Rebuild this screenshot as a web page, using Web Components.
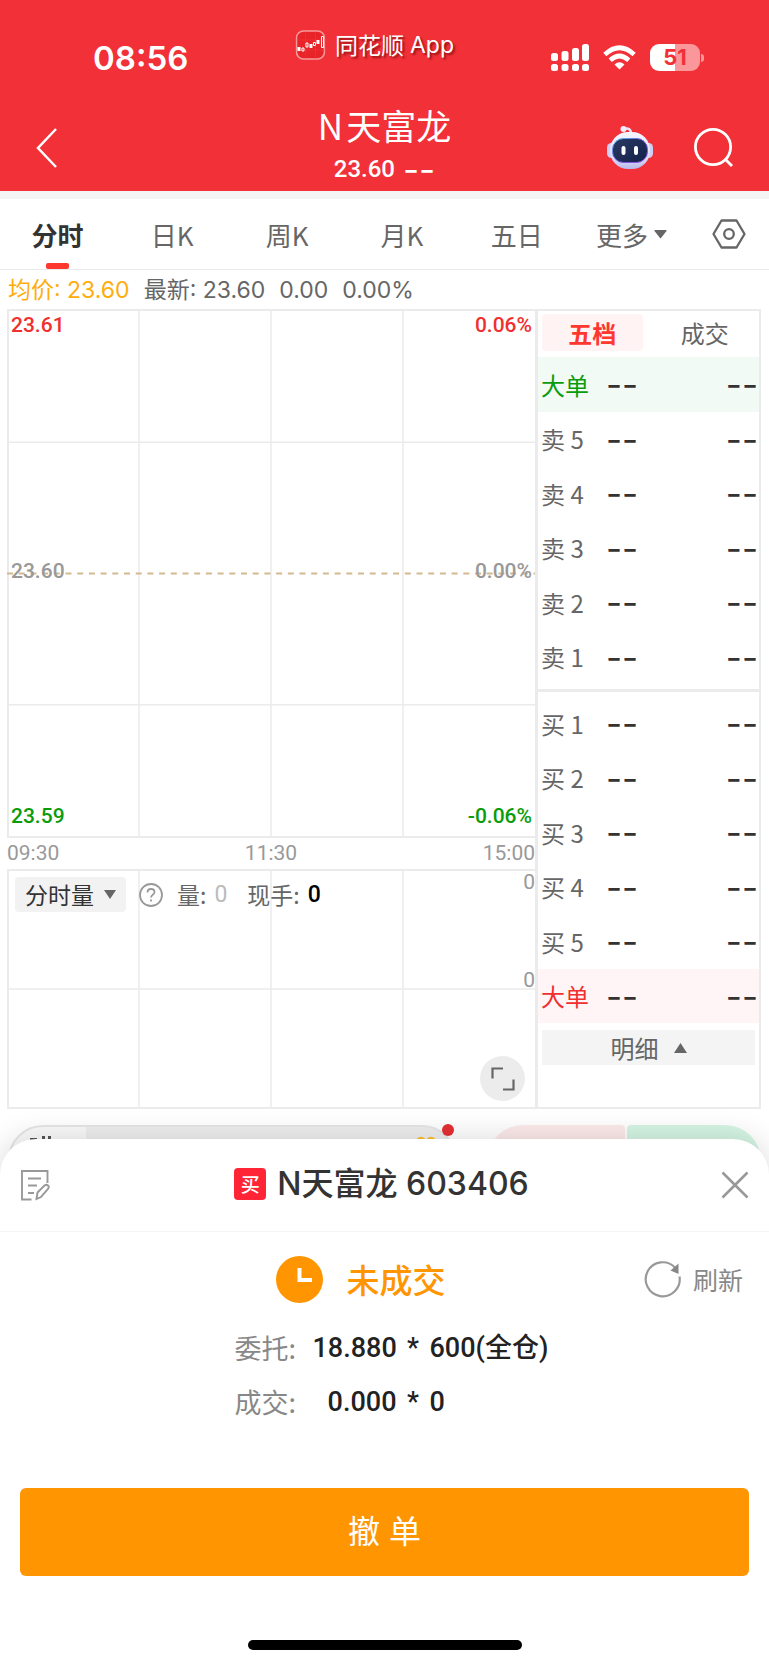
<!DOCTYPE html>
<html lang="zh-CN">
<head>
<meta charset="utf-8">
<meta name="viewport" content="width=device-width, initial-scale=1">
<title>N天富龙 603406</title>
<style>
  :root {
    --sans: "Noto Sans CJK SC", sans-serif;
    --inter: Inter, "Noto Sans CJK SC", sans-serif;
    --num: Roboto, "Noto Sans CJK SC", sans-serif;
    --brand: #f23037;
    --up: #f0302f;
    --down: #0a9c0a;
    --ink: #333;
    --text: #666;
    --muted: #999;
    --line: #ebebeb;
    --orange: #ff9500;
  }
  body {
    margin: 0;
    background: #fff;
    font-family: var(--sans);
    color: var(--text);
  }
</style>
</head>
<body>

<stock-page>
  <app-header slot="header" name="N天富龙" price="23.60"></app-header>
  <period-tabs slot="tabs"></period-tabs>
  <price-chart slot="chart"></price-chart>
  <order-book slot="book"></order-book>
  <order-sheet slot="sheet">
    <span slot="title">N天富龙 603406</span>
    <span slot="status">未成交</span>
  </order-sheet>
</stock-page>

<script>
// shared base: clones the class template into an open shadow root
class BaseElement extends HTMLElement {
  constructor() {
    super();
    const t = document.createElement("template");
    t.innerHTML = this.template;
    this.attachShadow({ mode: "open" });
    this.shadowRoot.appendChild(t.content.cloneNode(true));
  }
}

const RESET = `
  * { box-sizing: border-box; }
  button {
    border: 0;
    margin: 0;
    padding: 0;
    background: none;
    font: inherit;
    color: inherit;
    cursor: pointer;
  }
  svg { display: block; }
`;

class StatusBar extends BaseElement {
  get template() {
    return `
    <style>
      ${RESET}
      :host {
        display: flex;
        position: relative;
        justify-content: space-between;
        align-items: center;
        height: 104px;
        padding: 11px 69px 0 93px;
      }
      time {
        font: 600 33px/40px var(--inter);
      }
      .mark {
        position: absolute;
        top: 28px;
        left: calc(50% - 10px);
        display: flex;
        align-items: center;
        gap: 10px;
        font-size: 23px;
        line-height: 32px;
        transform: translateX(-50%);
        text-shadow: 2px 2px 2px rgba(90, 0, 0, .6);
      }
      .mark span { display: flex; gap: 6px; }
      .mark i { font: normal 23px/34px var(--inter); }
      .icons { display: flex; align-items: center; gap: 14px; }
      .battery {
        position: relative;
        width: 50px;
        height: 27px;
        border-radius: 9px;
        background: linear-gradient(90deg, #fff 50%, #f9979b 50%);
        color: var(--brand);
        font: 700 22px/27px var(--inter);
        text-align: center;
      }
      .battery::after {
        content: "";
        position: absolute;
        right: -4px;
        top: 10px;
        width: 3px;
        height: 8px;
        border-radius: 0 3px 3px 0;
        background: #f9979b;
      }
    </style>
    <time>08:56</time>
    <div class="mark">
      <svg width="30" height="30" viewBox="0 0 30 30" fill="none">
        <rect x="1" y="1" width="28" height="28" rx="7" fill="#e92429" stroke="#f79a9c" stroke-width="1.6"/>
        <path d="M1 10h28M1 20h28M10 1v28M20 1v28" stroke="#f04c50" stroke-width=".3"/>
        <path d="M2 17h3v4h-3zM14 14h3v4h-3zM21 10h3v4h-3z" fill="#fff"/>
        <path d="M6.500 18h2v3h-2zM10.500 13h2v4h-2zM18 12.500h2v3h-2zM26 6.500h2v11h-2z" stroke="#fff"/>
      </svg>
      <span>同花顺<i>App</i></span>
    </div>
    <div class="icons">
      <svg width="38" height="28" viewBox="0 0 38 28" fill="#fff">
        <rect x="0" y="9" width="7" height="8" rx="2.500"/><rect x="10.500" y="7" width="7" height="10" rx="2.500"/>
        <rect x="21" y="4" width="7" height="13" rx="2.500"/><rect x="31" y="0" width="7" height="17" rx="2.500"/>
        <rect x="0" y="20" width="7" height="7" rx="2.500"/><rect x="10.500" y="20" width="7" height="7" rx="2.500"/>
        <rect x="21" y="20" width="7" height="7" rx="2.500"/><rect x="31" y="20" width="7" height="7" rx="2.500"/>
      </svg>
      <svg width="33" height="25" viewBox="0 0 33 25" fill="none" stroke="#fff" stroke-width="4.600">
        <path d="M1.800 9.500Q16.500 -4 31.200 9.500"/>
        <path d="M7.200 15.200Q16.500 6.800 25.800 15.200"/>
        <path d="M11.500 19.500Q16.500 15.200 21.500 19.500L16.500 24.500Z" fill="#fff" stroke="none"/>
      </svg>
      <div class="battery">51</div>
    </div>
    `;
  }
}
customElements.define("status-bar", StatusBar);

class AppHeader extends BaseElement {
  get template() {
    return `
    <style>
      ${RESET}
      :host {
        display: block;
        background: var(--brand);
        color: #fff;
        border-bottom: 8px solid #f4f4f4;
      }
      nav {
        display: grid;
        grid-template-columns: 1fr auto 1fr;
        align-items: center;
        height: 87px;
        padding: 0 36px;
      }
      h1 {
        margin: 0;
        font-size: 35px;
        font-weight: 400;
        line-height: 42px;
        text-align: center;
      }
      .gap { margin-right: 3px; }
      p {
        display: flex;
        justify-content: center;
        align-items: center;
        gap: 8px;
        margin: 9px 0 8px;
        font: 500 24px/28px var(--num);
      }
      p b { font: 400 35px/28px var(--inter); }
      .actions {
        display: flex;
        justify-content: flex-end;
        align-items: center;
        gap: 40px;
      }
    </style>
    <status-bar></status-bar>
    <nav>
      <button aria-label="返回">
        <svg width="21" height="40" viewBox="0 0 21 40" fill="none" stroke="#fff" stroke-width="2.500"><path d="M20 1L2 20L20 39"/></svg>
      </button>
      <div>
        <h1><span class="gap">N</span><span class="name"></span></h1>
        <p><span class="price"></span><b>--</b></p>
      </div>
      <div class="actions">
        <button aria-label="助手">
          <svg width="48" height="46" viewBox="0 0 48 46">
            <defs>
              <linearGradient id="shell" x2="0" y2="1"><stop offset="0" stop-color="#f7f6ff"/><stop offset=".7" stop-color="#dcdcf8"/><stop offset="1" stop-color="#b9b8ea"/></linearGradient>
              <linearGradient id="glass" x2="1" y2="1"><stop offset="0" stop-color="#2a3963"/><stop offset="1" stop-color="#14214a"/></linearGradient>
              <linearGradient id="rim" x2="1" y2="1"><stop offset="0" stop-color="#63c8f0"/><stop offset=".5" stop-color="#6a4ee0"/><stop offset="1" stop-color="#9b5cf0"/></linearGradient>
            </defs>
            <path d="M18 4C22 2.500 25 4 25 9" fill="none" stroke="#e9e6fa" stroke-width="2.500"/>
            <circle cx="17.500" cy="4" r="3" fill="#f3eefc"/>
            <rect x="1" y="18" width="9" height="15" rx="4.500" fill="#cfcff3"/>
            <rect x="38" y="18" width="9" height="15" rx="4.500" fill="#cfcff3"/>
            <rect x="4" y="7" width="40" height="37" rx="18" fill="url(#shell)"/>
            <rect x="6.500" y="13.500" width="35" height="24" rx="11" fill="url(#glass)" stroke="url(#rim)" stroke-width="1"/>
            <rect x="15.500" y="21" width="4" height="9" rx="2" fill="#fff"/>
            <rect x="28" y="21" width="4" height="9" rx="2" fill="#fff"/>
          </svg>
        </button>
        <button aria-label="搜索">
          <svg width="39" height="39" viewBox="0 0 39 39" fill="none" stroke="#fff" stroke-width="2.800"><circle cx="19" cy="19" r="17.600"/><path d="M31 31L38 38"/></svg>
        </button>
      </div>
    </nav>
    `;
  }

  connectedCallback() {
    const name = this.getAttribute("name");
    this.shadowRoot.querySelector(".gap").textContent = name.slice(0, 1);
    this.shadowRoot.querySelector(".name").textContent = name.slice(1);
    this.shadowRoot.querySelector(".price").textContent = this.getAttribute("price");
  }
}
customElements.define("app-header", AppHeader);

class PeriodTabs extends BaseElement {
  get template() {
    const tabs = ["日K", "周K", "月K", "五日"];
    return `
    <style>
      ${RESET}
      :host {
        display: grid;
        grid-template-columns: repeat(6, 1fr) 80px;
        height: 70px;
        border-bottom: 1px solid var(--line);
        font-size: 26px;
      }
      button {
        display: flex;
        position: relative;
        justify-content: center;
        align-items: center;
        gap: 6px;
      }
      button[aria-selected="true"] {
        color: var(--ink);
        font-weight: 700;
      }
      button[aria-selected="true"]::after {
        content: "";
        position: absolute;
        bottom: 0;
        width: 23px;
        height: 6px;
        border-radius: 2px;
        background: #fe372f;
      }
    </style>
    <button role="tab" aria-selected="true">分时</button>
    ${tabs.map(t => `<button role="tab">${t}</button>`).join("")}
    <button role="tab">更多<svg width="13" height="9" viewBox="0 0 13 9" fill="#666"><path d="M1 0h11q1 0 .5 1L7 8q-.5.800-1 0L.5 1Q0 0 1 0z"/></svg></button>
    <button aria-label="设置">
      <svg width="34" height="30" viewBox="0 0 34 30" fill="none" stroke="#666" stroke-width="2.300" stroke-linejoin="round"><path d="M9.500 1.500h15L32.500 15L24.500 28.500h-15L1.500 15z"/><circle cx="17" cy="15" r="4.800"/></svg>
    </button>
    `;
  }
}
customElements.define("period-tabs", PeriodTabs);

// Plot area with four columns; rows sets how many bands it is cut into
class PlotGrid extends BaseElement {
  get template() {
    return `
    <style>
      ${RESET}
      :host {
        display: block;
        position: relative;
        border: 2px solid var(--line);
        border-right: 0;
      }
      svg {
        position: absolute;
        top: 0;
        left: -2px;
        width: calc(100% + 2px);
        height: 100%;
      }
    </style>
    <svg stroke="#ebebeb" stroke-width="2"></svg>
    <slot></slot>
    `;
  }

  connectedCallback() {
    const rows = Number(this.getAttribute("rows"));
    let lines = "";
    for (let i = 1; i < 4; i++) {
      lines += `<line x1="${i * 25}%" x2="${i * 25}%" y1="0" y2="100%" stroke-width="1.500"/>`;
    }
    for (let i = 1; i < rows; i++) {
      const y = i / rows * 100;
      const dash = this.hasAttribute("baseline") && i === rows / 2
        ? `stroke="#d3b98f" stroke-width="2" stroke-dasharray="6 5.700"` : `stroke-width="1.500"`;
      lines += `<line x1="0" x2="100%" y1="${y}%" y2="${y}%" ${dash}/>`;
    }
    this.shadowRoot.querySelector("svg").innerHTML = lines;
  }
}
customElements.define("plot-grid", PlotGrid);

class PriceChart extends BaseElement {
  get template() {
    return `
    <style>
      ${RESET}
      :host {
        display: block;
        font: 500 21px/26px var(--num);
      }
      .price { height: 529px; }
      .labels {
        display: flex;
        position: relative;
        flex-direction: column;
        justify-content: space-between;
        height: 100%;
        padding: 1px 3px 7px 2px;
      }
      .labels div, .axis { display: flex; justify-content: space-between; }
      .up { color: var(--up); }
      .flat { color: var(--muted); }
      .down { color: var(--down); }
      .axis { line-height: 31px; color: var(--muted); font-weight: 400; }
      .volume { height: 240px; color: var(--muted); font-weight: 400; }
      .volume .labels {
        justify-content: flex-start;
        align-items: flex-end;
        gap: 76px;
        padding: 0;
        line-height: 22px;
      }
      .legend {
        display: flex;
        position: absolute;
        top: 6px;
        left: 6px;
        align-items: center;
        height: 35px;
        font: 400 23px/35px var(--sans);
        color: var(--text);
      }
      .pick {
        display: flex;
        align-items: center;
        gap: 10px;
        height: 35px;
        padding: 0 10px;
        border-radius: 4px;
        background: #f2f2f2;
        color: var(--ink);
      }
      .help { margin: 0 14px 0 13px; }
      .legend b { margin: 0 20px 0 8px; font: 400 23px/35px var(--num); color: #bbb; }
      .legend b:last-child { font-weight: 500; color: #000; }
      .zoom {
        display: grid;
        position: absolute;
        right: 10px;
        bottom: 6px;
        width: 45px;
        height: 45px;
        border-radius: 50%;
        background: #ececec;
        place-items: center;
      }
    </style>
    <plot-grid class="price" rows="4" baseline>
      <div class="labels">
        <div class="up"><span>23.61</span><span>0.06%</span></div>
        <div class="flat"><span>23.60</span><span>0.00%</span></div>
        <div class="down"><span>23.59</span><span>-0.06%</span></div>
      </div>
    </plot-grid>
    <div class="axis"><span>09:30</span><span>11:30</span><span>15:00</span></div>
    <plot-grid class="volume" rows="2">
      <div class="labels"><span>0</span><span>0</span></div>
      <div class="legend">
        <button class="pick">分时量<svg width="12" height="9" viewBox="0 0 12 9" fill="#666"><path d="M0 0h12L6 9z"/></svg></button>
        <button class="help" aria-label="说明">
          <svg width="24" height="24" viewBox="0 0 24 24" fill="none" stroke="#999" stroke-width="1.800"><circle cx="12" cy="12" r="11"/><path d="M8.500 9.500C8.500 7.300 10 6 12 6s3.500 1.300 3.500 3.200c0 2.300-3.500 2.600-3.500 5.300M12 16.500v2"/></svg>
        </button>
        <span>量:</span><b>0</b><span>现手:</span><b>0</b>
      </div>
      <button class="zoom" aria-label="全屏">
        <svg width="24" height="24" viewBox="0 0 24 24" fill="none" stroke="#666" stroke-width="2.200"><path d="M1.500 11.500V1.500H12M22.500 12.500V22.500H12"/></svg>
      </button>
    </plot-grid>
    `;
  }
}
customElements.define("price-chart", PriceChart);

class OrderBook extends BaseElement {
  rows(labels) {
    return labels.map(l => {
      const big = l === "大单" ? " class=\"big\"" : "";
      return `<tr${big}><th scope="row">${l}</th><td>--</td><td>--</td></tr>`;
    }).join("");
  }

  get template() {
    return `
    <style>
      ${RESET}
      :host {
        display: block;
        border: 2px solid var(--line);
        border-left-width: 3px;
        font-size: 24px;
      }
      .tabs {
        display: grid;
        grid-template-columns: 1fr 1fr;
        gap: 12px;
        padding: 3px 4px 6px;
        line-height: 37px;
      }
      .tabs button { border-radius: 4px; }
      .tabs [aria-selected="true"] {
        background: #fff3f3;
        color: #fe372f;
        font-weight: 700;
      }
      table {
        width: 100%;
        height: 327px;
        border-collapse: collapse;
        table-layout: fixed;
      }
      th {
        width: 68px;
        padding: 0 0 0 3px;
        font-weight: 400;
        text-align: left;
        white-space: nowrap;
      }
      td {
        padding: 0;
        color: var(--ink);
        font: 400 35px/32px var(--inter);
      }
      td:last-child { padding-right: 1px; text-align: right; }
      .sell .big { background: #f2faf6; color: var(--down); }
      .buy .big { background: #fff5f6; color: var(--up); }
      hr {
        height: 3px;
        margin: 5px 0 4px;
        border: 0;
        background: var(--line);
      }
      .detail {
        display: flex;
        justify-content: center;
        align-items: center;
        gap: 15px;
        width: calc(100% - 8px);
        height: 35px;
        margin: 7px 4px 0;
        background: #f4f4f4;
      }
    </style>
    <div class="tabs" role="tablist">
      <button role="tab" aria-selected="true">五档</button>
      <button role="tab">成交</button>
    </div>
    <table class="sell">${this.rows(["大单", "卖 5", "卖 4", "卖 3", "卖 2", "卖 1"])}</table>
    <hr>
    <table class="buy">${this.rows(["买 1", "买 2", "买 3", "买 4", "买 5", "大单"])}</table>
    <button class="detail">明细<svg width="13" height="10" viewBox="0 0 13 10" fill="#666"><path d="M6.500 0L13 10H0z"/></svg></button>
    `;
  }
}
customElements.define("order-book", OrderBook);

class OrderSheet extends BaseElement {
  get template() {
    return `
    <style>
      ${RESET}
      :host {
        display: block;
        border-radius: 36px 36px 0 0;
        background: #fff;
        box-shadow: 0 -2px 30px rgba(0, 0, 0, .14);
      }
      header {
        display: grid;
        grid-template-columns: 1fr auto 1fr;
        align-items: center;
        height: 93px;
        padding: 0 20px;
        border-bottom: 1px solid #f5f5f5;
      }
      header > :last-child { justify-self: end; }
      h2 {
        display: flex;
        align-items: center;
        gap: 11px;
        margin: 0 6px 2px 0;
        color: var(--ink);
        font: 500 32px/40px var(--inter);
      }
      .badge {
        width: 32px;
        border-radius: 4px;
        background: #ff2436;
        color: #fff;
        font: 500 19px/32px var(--sans);
        text-align: center;
      }
      .status {
        display: flex;
        align-items: center;
        gap: 24px;
        padding: 24px 26px 18px calc(50% - 109px);
        color: var(--orange);
        font-size: 33px;
        font-weight: 500;
        line-height: 47px;
      }
      .refresh {
        display: flex;
        align-items: center;
        gap: 12px;
        margin-left: auto;
        color: #888;
        font-size: 25px;
        font-weight: 400;
      }
      dl {
        display: grid;
        grid-template-columns: 78px 84px 33px auto;
        margin: 0 0 59px calc(50% - 150px);
        line-height: 54px;
      }
      dt { color: #888; font-size: 27px; }
      dd {
        margin: 0;
        color: #222;
        font: 500 27px/54px var(--num);
      }
      dd.amount { text-align: right; }
      dd.times { text-align: center; }
      .cancel {
        display: block;
        width: calc(100% - 40px);
        height: 88px;
        margin: 0 20px;
        border-radius: 6px;
        background: var(--orange);
        color: #fff;
        font: 400 32px/40px var(--inter);
      }
      .home {
        width: 274px;
        height: 10px;
        margin: 64px auto 0;
        border-radius: 5px;
        background: #000;
      }
    </style>
    <header>
      <button aria-label="备注">
        <svg width="30" height="32" viewBox="0 0 30 32" fill="none" stroke="#999" stroke-width="1.900"><path d="M27.500 14V2H2v28.500h9.500M8 9.500h13M8 16.500h9M8 24h6"/><path d="M16.500 30l1-6.500 7-7q2-1.500 3.500 0t0 3.500l-7 8zM17.500 24"/></svg>
      </button>
      <h2><span class="badge">买</span><slot name="title"></slot></h2>
      <button aria-label="关闭">
        <svg width="28" height="28" viewBox="0 0 28 28" fill="none" stroke="#999" stroke-width="2.600"><path d="M1.500 1.500l25 25M26.500 1.500l-25 25"/></svg>
      </button>
    </header>
    <div class="status">
      <svg width="47" height="47" viewBox="0 0 47 47"><circle cx="23.500" cy="23.500" r="23.500" fill="#ff9500"/><path d="M23.500 12v12H36" fill="none" stroke="#fff" stroke-width="4"/></svg>
      <slot name="status"></slot>
      <button class="refresh">
        <svg width="37" height="37" viewBox="0 0 37 37" fill="none" stroke="#999" stroke-width="2.200"><path d="M35.500 15.500A17 17 0 1 1 31 6.500"/><path d="M34.500 2.500V13l-8-3.500z" fill="#888" stroke="none"/></svg>
        刷新
      </button>
    </div>
    <dl>
      <dt>委托:</dt><dd class="amount">18.880</dd><dd class="times">*</dd><dd>600(全仓)</dd>
      <dt>成交:</dt><dd class="amount">0.000</dd><dd class="times">*</dd><dd>0</dd>
    </dl>
    <button class="cancel">撤 单</button>
    <div class="home"></div>
    `;
  }
}
customElements.define("order-sheet", OrderSheet);

class StockPage extends BaseElement {
  get template() {
    return `
    <style>
      ${RESET}
      :host {
        display: block;
        position: relative;
        min-height: 100vh;
        overflow: hidden;
      }
      .quote {
        display: flex;
        gap: 14px;
        padding: 0 8px;
        font: 400 23px/40px var(--inter);
        height: 39px;
        white-space: nowrap;
      }
      .avg { color: #ffad0d; }
      main {
        display: grid;
        grid-template-columns: minmax(0, 1fr) 226px;
        padding: 0 8px 0 7px;
      }
      /* toolbar that the sheet mostly hides */
      .dock {
        display: flex;
        height: 70px;
        margin-top: 16px;
        padding: 0 8px;
      }
      .tools {
        position: relative;
        flex: 1;
        border: 2px solid #e6e6e6;
        border-radius: 36px;
        background: linear-gradient(90deg, #fafafa 76px, #efefef 76px);
      }
      .tools svg { position: absolute; top: 9px; left: 20px; }
      .tools .gold { left: auto; right: 18px; }
      .dot {
        position: absolute;
        top: -3px;
        right: 1px;
        width: 12px;
        height: 12px;
        border-radius: 50%;
        background: #e62f33;
      }
      .buy, .sell { background: #fdeaea; width: 138px; }
      .buy { margin-left: 30px; border-radius: 36px 4px 0 0; }
      .sell { margin-left: 2px; width: 134px; border-radius: 4px 36px 0 0; background: #d5f5e4; }
      .sheet {
        position: absolute;
        left: 0;
        right: 0;
        bottom: 0;
        padding-top: 40px;
      }
      ::slotted(order-sheet) { padding-bottom: 15px; }
    </style>
    <slot name="header"></slot>
    <slot name="tabs"></slot>
    <div class="quote">
      <span class="avg">均价: 23.60</span><span>最新: 23.60</span><span>0.00</span><span>0.00%</span>
    </div>
    <main>
      <slot name="chart"></slot>
      <slot name="book"></slot>
    </main>
    <div class="dock">
      <div class="tools">
        <svg width="24" height="12" viewBox="0 0 24 12" fill="#555"><path d="M0 2h7v2h-7zM12 0h3v12h-3zM18 0h3v12h-3z"/></svg>
        <svg class="gold" width="22" height="12" viewBox="0 0 22 12" fill="none" stroke="#fdbf2d" stroke-width="2.500"><circle cx="6" cy="6" r="4"/><circle cx="16" cy="6" r="4"/></svg>
        <i class="dot"></i>
      </div>
      <div class="buy"></div>
      <div class="sell"></div>
    </div>
    <div class="sheet"><slot name="sheet"></slot></div>
    `;
  }
}
customElements.define("stock-page", StockPage);
</script>
</body>
</html>
